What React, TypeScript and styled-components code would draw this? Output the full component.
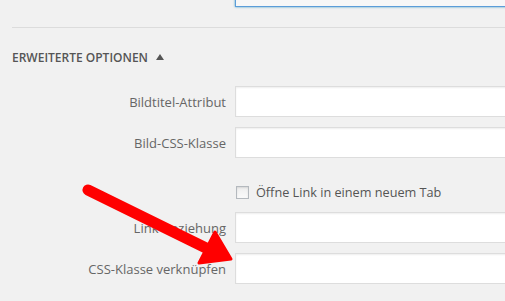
import React from 'react';
import styled, { createGlobalStyle } from 'styled-components';

const GlobalStyle = createGlobalStyle`
  html, body {
    margin: 0;
    padding: 0;
    background: #f1f1f1;
    overflow: hidden;
  }
  body {
    font-family: "Open Sans", "Liberation Sans", sans-serif;
    color: #555;
  }
`;

const Page = styled.div`
  position: relative;
  width: 505px;
  height: 301px;
  overflow: hidden;
`;

const TopField = styled.div`
  margin: -24px 0 0 235px;
  width: 300px;
  height: 29px;
  background: #f7f7f7;
  border: 1px solid #5b9dd9;
  box-shadow: 0 0 2px rgba(30, 140, 190, 0.8);
`;

const Divider = styled.hr`
  margin: 20px 0 0 12px;
  border: 0;
  border-top: 1px solid #dcdcdc;
  height: 0;
`;

const Toggle = styled.div`
  display: flex;
  align-items: center;
  gap: 8px;
  margin: 20px 0 0 12px;
  height: 18px;
  font-size: 12px;
  font-weight: 600;
  text-transform: uppercase;
  color: #555;
`;

const Caret = styled.span`
  width: 0;
  height: 0;
  border-left: 4px solid transparent;
  border-right: 4px solid transparent;
  border-bottom: 6px solid #555;
`;

const Form = styled.div`
  display: grid;
  grid-template-columns: 226px 300px;
  column-gap: 9px;
  row-gap: 10px;
  align-items: center;
  margin-top: 20px;
`;

const Label = styled.label`
  justify-self: end;
  font-size: 13px;
  color: #666;
`;

const Field = styled.div`
  height: 29px;
  background: #fff;
  border: 1px solid #ddd;
  box-shadow: inset 0 1px 2px rgba(0, 0, 0, 0.07);
`;

const CheckRow = styled.div`
  grid-column: 2;
  display: flex;
  align-items: center;
  gap: 7px;
  height: 18px;
  margin: 15px 0 1px 1px;
  font-size: 12.7px;
  color: #555;
`;

const Box = styled.span`
  width: 11px;
  height: 11px;
  border: 1px solid #b4b9be;
  background: linear-gradient(#eee, #fafafa);
  box-shadow: inset 0 1px 2px rgba(0, 0, 0, 0.1);
`;

const Arrow = styled.svg`
  position: absolute;
  left: 0;
  top: 0;
  pointer-events: none;
`;

export default function App() {
  return (
    <Page>
      <GlobalStyle />
      <TopField />
      <Divider />
      <Toggle>
        Erweiterte Optionen
        <Caret />
      </Toggle>
      <Form>
        <Label>Bildtitel-Attribut</Label>
        <Field />
        <Label>Bild-CSS-Klasse</Label>
        <Field />
        <CheckRow>
          <Box />
          Öffne Link in einem neuem Tab
        </CheckRow>
        <Label>Link-Beziehung</Label>
        <Field />
        <Label>CSS-Klasse verknüpfen</Label>
        <Field />
      </Form>
      <Arrow width="505" height="301" viewBox="0 0 505 301">
        <line x1="88" y1="190" x2="206" y2="248" stroke="#ff0000" strokeWidth="11" strokeLinecap="round" />
        <polygon points="215,232 231,259 199,263" fill="#ff0000" stroke="#ff0000" strokeWidth="3" strokeLinejoin="round" />
      </Arrow>
    </Page>
  );
}
